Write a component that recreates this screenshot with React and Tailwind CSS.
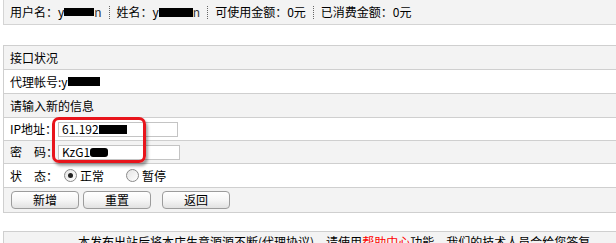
import React from "react";

function Redact({ className }) {
  return <span className={`inline-block bg-black align-middle ${className}`} />;
}

function Sep() {
  return <span className="mx-[7px] inline-block h-[13px] border-l border-dotted border-[#666] align-middle" />;
}

function Radio({ checked }) {
  return (
    <span className="inline-flex h-[13px] w-[13px] items-center justify-center rounded-full border border-[#8a8a8a] bg-gradient-to-br from-[#e4e4e4] to-white">
      {checked && <span className="h-[5px] w-[5px] rounded-full bg-[#222]" />}
    </span>
  );
}

function Btn({ children }) {
  return (
    <button className="h-[18px] w-[68px] rounded-[4px] border border-[#9c9c9c] bg-gradient-to-b from-white via-[#f6f6f6] to-[#e2e2e2] text-[12px] leading-none text-black">
      {children}
    </button>
  );
}

function Row({ gray, h = "h-[24px]", children }) {
  return (
    <div
      className={`flex items-center border-t border-[#cfcfcf] pl-[6px] ${h} ${
        gray ? "bg-[#f3f3f3]" : "bg-white"
      }`}
    >
      {children}
    </div>
  );
}

export default function App() {
  return (
    <div className="relative h-[243px] w-[616px] overflow-hidden bg-white font-['SimSun','Noto_Sans_CJK_SC',sans-serif] text-[12px] leading-none text-black">
      {/* top info bar */}
      <div className="ml-[3px] flex h-[25px] items-center border-b border-l border-[#d4d4d4] bg-[#f3f3f3] pl-[6px]">
        <span>用户名：y</span>
        <Redact className="h-[8px] w-[30px]" />
        <span className="text-[#333]">n</span>
        <Sep />
        <span>姓名：y</span>
        <Redact className="h-[9px] w-[34px]" />
        <span className="text-[#333]">n</span>
        <Sep />
        <span>可使用金额：0元</span>
        <Sep />
        <span>已消费金额：0元</span>
      </div>

      <div className="h-[20px]" />

      {/* form table */}
      <div className="ml-[3px] border-l border-[#cfcfcf]">
        <Row gray>接口状况</Row>
        <Row>
          <span>代理帐号:y</span>
          <Redact className="h-[9px] w-[32px]" />
        </Row>
        <Row gray>请输入新的信息</Row>
        <Row h="h-[23px]">
          <span className="w-[48px]">IP地址：</span>
          <div className="flex h-[15px] w-[120px] items-center border border-[#c4c4c4] bg-white pl-[3px]">
            <span>61.192</span>
            <Redact className="h-[9px] w-[28px]" />
          </div>
        </Row>
        <Row gray h="h-[23px]">
          <span className="w-[48px] whitespace-pre">密　码：</span>
          <div className="flex h-[15px] w-[122px] items-center border border-[#c4c4c4] bg-white pl-[3px]">
            <span>KzG1</span>
            <Redact className="h-[9px] w-[18px] rounded-[3px]" />
          </div>
        </Row>
        <Row>
          <span className="w-[54px] whitespace-pre">状　态：</span>
          <Radio checked />
          <span className="ml-[3px]">正常</span>
          <span className="ml-[22px]" />
          <Radio />
          <span className="ml-[3px]">暂停</span>
        </Row>
        <div className="flex h-[26px] items-center gap-[4px] border-y border-[#cfcfcf] bg-[#f3f3f3] pl-[7px]">
          <Btn>新增</Btn>
          <Btn>重置</Btn>
          <span className="ml-[3px]" />
          <Btn>返回</Btn>
        </div>
      </div>

      <div className="h-[18px]" />

      <div className="ml-[3px] flex h-[20px] items-start border-l border-t border-[#cfcfcf] bg-[#f3f3f3] pl-[74px] pt-[4px]">
        <span>本发布出站后将本店生意源源不断(代理协议)，请使用</span>
        <span className="text-[#ff0000]">帮助中心</span>
        <span>功能，我们的技术人员会给您答复。</span>
      </div>

      {/* red highlight annotation */}
      <div className="absolute left-[52px] top-[117px] h-[46px] w-[94px] rounded-[7px] border-[3px] border-[#e8141b] shadow-[2px_3px_3px_rgba(0,0,0,0.35)]" />
    </div>
  );
}
